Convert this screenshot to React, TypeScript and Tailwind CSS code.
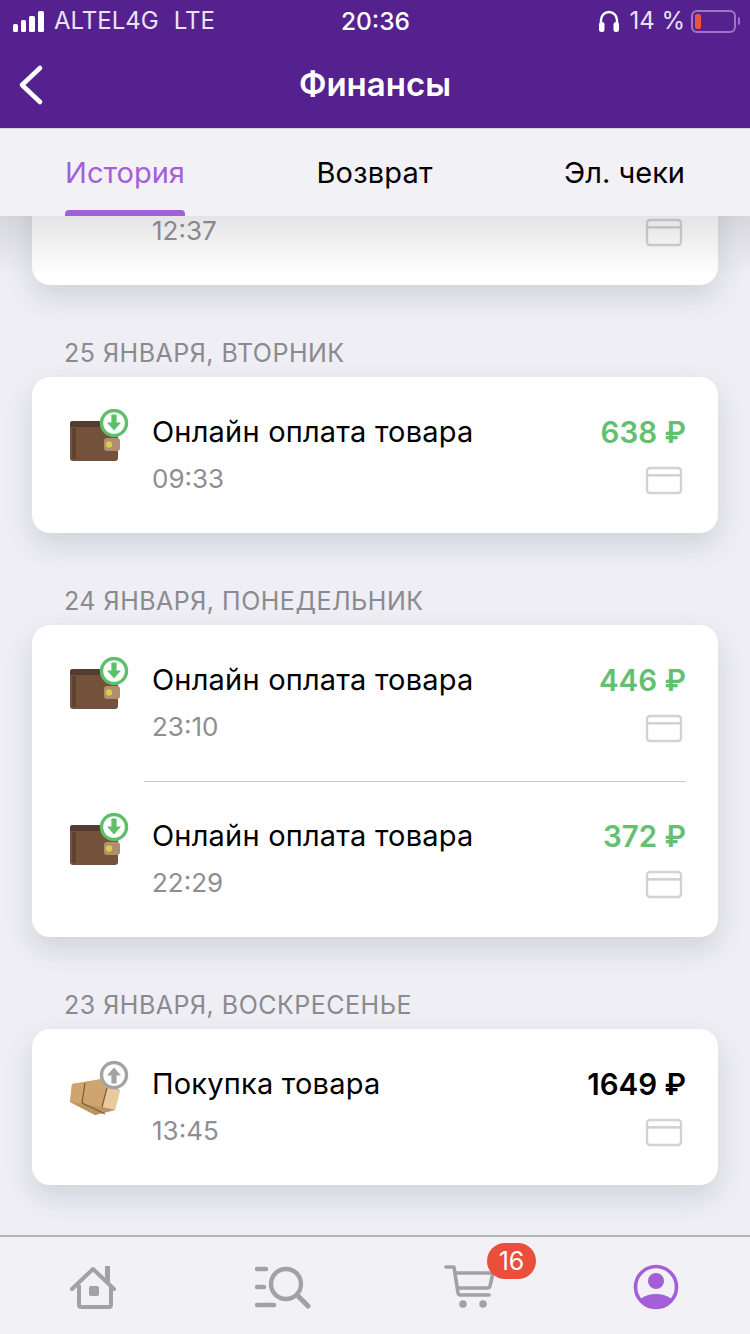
import React from "react";

const font = "font-['Inter','Noto_Sans',sans-serif]";

function WalletIcon() {
  return (
    <svg width="62" height="58" viewBox="0 0 62 58" className="shrink-0">
      <rect x="2" y="12" width="48" height="40" rx="3" fill="#74513a" />
      <path d="M2 15a3 3 0 0 1 3-3h42a3 3 0 0 1 3 3v3H2z" fill="#553c30" />
      <rect x="4" y="19" width="4" height="31" fill="#5f4331" />
      <rect x="36" y="29" width="16" height="13" rx="3" fill="#b08f6e" />
      <circle cx="41" cy="35.5" r="3.2" fill="#dccb4a" />
      <circle cx="46" cy="14" r="12.5" fill="#ffffff" stroke="#5dbf68" strokeWidth="3.4" />
      <path d="M43.4 5.500h5.200v8H53L46 21.500 39 13.500h4.400z" fill="#5dbf68" />
    </svg>
  );
}

function BoxIcon() {
  return (
    <svg width="62" height="58" viewBox="0 0 62 58" className="shrink-0">
      <path d="M4 23l30-5 18 11-5 20-20 5L2 41z" fill="#d2a972" />
      <path d="M4 23l30-5 5 9-5 19-32-5z" fill="#cfa56f" />
      <path d="M39 27l13 2-5 20-13-3z" fill="#e8ca9d" />
      <path d="M2 41l32 5 13 3-20 5z" fill="#bd9562" />
      <path d="M17 22l-3 20 23 11" fill="none" stroke="#7a5a38" strokeWidth="1.2" />
      <path d="M39 27l-5 19" stroke="#7a5a38" strokeWidth="1.2" />
      <circle cx="46" cy="14" r="12.5" fill="#ffffff" stroke="#a3a3a6" strokeWidth="3.4" />
      <path d="M43.400 22.500v-8H39l7-8 7 8h-4.400v8z" fill="#a3a3a6" />
    </svg>
  );
}

function CardIcon() {
  return (
    <svg width="38" height="29" viewBox="0 0 38 29" className="shrink-0">
      <rect x="2" y="2" width="34" height="25" rx="3" fill="none" stroke="#d2d2d3" strokeWidth="2.4" />
      <rect x="2" y="8" width="34" height="2.6" fill="#d2d2d3" />
    </svg>
  );
}

function Row({
  title,
  time,
  price,
  green = true,
  box = false,
}: {
  title: string;
  time: string;
  price: string;
  green?: boolean;
  box?: boolean;
}) {
  return (
    <div className="flex h-[156px] pl-[36px] pr-[32px]">
      <div className="w-[84px] pt-[32px]">{box ? <BoxIcon /> : <WalletIcon />}</div>
      <div className="flex-1">
        <div className="pt-[37px] text-[29px] leading-[36px] tracking-[0.2px] text-black">{title}</div>
        <div className="pt-[12px] text-[26px] leading-[34px] text-[#8e8e93]">{time}</div>
      </div>
      <div className="flex flex-col items-end">
        <div className={`pt-[37px] text-[29.5px] font-semibold leading-[36px] ${green ? "text-[#62c070]" : "text-black"}`}>
          {price}
        </div>
        <div className="pr-[3px] pt-[16px]">
          <CardIcon />
        </div>
      </div>
    </div>
  );
}

function Section({ label, children }: { label: string; children: React.ReactNode }) {
  return (
    <div>
      <div className="flex h-[92px] items-end pb-[8px] pl-[64px] text-[25px] leading-[32px] tracking-[0.5px] text-[#8a8a8f]">
        {label}
      </div>
      <div className="mx-[32px] rounded-[18px] bg-white shadow-[0_12px_28px_rgba(60,60,80,0.16)]">{children}</div>
    </div>
  );
}

export default function App() {
  return (
    <div className={`flex h-[1334px] w-[750px] flex-col overflow-hidden bg-[#eeeef4] ${font}`}>
      <div className="z-20 h-[128px] shrink-0 bg-[#55218f] text-white">
        <div className="flex h-[42px] items-center justify-between pl-[13px] pr-[10px] text-[24px] leading-none">
          <div className="flex w-[300px] items-center">
            <div className="flex h-[21px] items-end gap-[3px]">
              <div className="h-[8px] w-[5px] rounded-[1.5px] bg-white" />
              <div className="h-[12px] w-[5px] rounded-[1.5px] bg-white" />
              <div className="h-[16px] w-[6px] rounded-[1.5px] bg-white" />
              <div className="h-[21px] w-[6px] rounded-[1.5px] bg-white" />
            </div>
            <span className="ml-[10px] text-[#eae3f3]">ALTEL4G</span>
            <span className="ml-[15px] text-[#eae3f3]">LTE</span>
          </div>
          <div className="mr-[2px] text-[24.5px] font-medium">20:36</div>
          <div className="flex w-[300px] items-center justify-end">
            <svg width="22" height="24" viewBox="0 0 22 24">
              <path d="M3 14v-3a8 8 0 0 1 16 0v3" fill="none" stroke="#fff" strokeWidth="2.4" />
              <rect x="1" y="13" width="5.5" height="10" rx="2.5" fill="#fff" />
              <rect x="15.5" y="13" width="5.5" height="10" rx="2.5" fill="#fff" />
            </svg>
            <span className="ml-[9px] text-[24px] text-[#eae3f3]">14 %</span>
            <div className="ml-[6px] flex h-[23px] w-[45px] items-center rounded-[6px] border-2 border-[#9a78c4] px-[2px]">
              <div className="h-[15px] w-[6px] rounded-[2px] bg-[#e8553f]" />
            </div>
            <div className="ml-[2px] h-[8px] w-[2px] rounded-r-full bg-[#9a78c4]" />
          </div>
        </div>
        <div className="relative flex h-[86px] items-center justify-center text-[33px] font-semibold">
          <svg width="28" height="42" viewBox="0 0 28 42" className="absolute left-[17px] top-[22px]">
            <path d="M23 4L5 21l18 17" fill="none" stroke="#fff" strokeWidth="4.6" strokeLinecap="round" strokeLinejoin="round" />
          </svg>
          Финансы
        </div>
      </div>

      <div className="z-20 flex h-[88px] shrink-0 items-start justify-between border-t border-[#d8d7df] bg-[#f2f1f6] px-[65px] text-[29px] text-black">
        <div className="flex h-[87px] w-[120px] flex-col items-center justify-between">
          <div className="pt-[26px] leading-[36px] text-[#a55fd6]">История</div>
          <div className="h-[6px] w-[120px] rounded-t-[4px] bg-[#a55fd6]" />
        </div>
        <div className="pt-[26px] leading-[36px] tracking-[0.2px]">Возврат</div>
        <div className="pt-[26px] leading-[36px]">Эл. чеки</div>
      </div>

      <div className="relative h-[1019px] shrink-0 overflow-hidden">
        <div className="absolute inset-x-0 top-0 z-10 h-[60px] bg-gradient-to-b from-[rgba(90,90,100,0.16)] to-transparent" />
        <div className="mx-[32px] -mt-[87px] h-[156px] rounded-[18px] bg-white shadow-[0_12px_28px_rgba(60,60,80,0.16)]">
          <div className="flex h-full justify-between pl-[120px] pr-[35px]">
            <div className="pt-[85px] text-[26px] leading-[34px] text-[#8e8e93]">12:37</div>
            <div className="pt-[89px]">
              <CardIcon />
            </div>
          </div>
        </div>
        <Section label="25 ЯНВАРЯ, ВТОРНИК">
          <Row title="Онлайн оплата товара" time="09:33" price="638 ₽" />
        </Section>
        <Section label="24 ЯНВАРЯ, ПОНЕДЕЛЬНИК">
          <Row title="Онлайн оплата товара" time="23:10" price="446 ₽" />
          <div className="ml-[112px] mr-[32px] h-px bg-[#c9c9cc]" />
          <div className="-mt-px">
            <Row title="Онлайн оплата товара" time="22:29" price="372 ₽" />
          </div>
        </Section>
        <Section label="23 ЯНВАРЯ, ВОСКРЕСЕНЬЕ">
          <Row title="Покупка товара" time="13:45" price="1649 ₽" green={false} box />
        </Section>
      </div>

      <div className="z-20 grid h-[99px] shrink-0 grid-cols-4 border-t-2 border-[#b3b3b8] bg-[#f2f1f6]">
        <div className="flex items-start justify-center pt-[28px]">
          <svg width="50" height="44" viewBox="0 0 50 44">
            <path d="M3 24L24 4l21 20" fill="none" stroke="#a2a2a5" strokeWidth="4" strokeLinecap="round" strokeLinejoin="round" />
            <path d="M36 1h5v16h-5z" fill="#a2a2a5" />
            <path d="M10 20v20a2 2 0 0 0 2 2h28a2 2 0 0 0 2-2V20" fill="none" stroke="#a2a2a5" strokeWidth="4" />
            <rect x="20" y="21" width="10" height="10" rx="2" fill="#a2a2a5" />
          </svg>
        </div>
        <div className="flex items-start justify-center pl-[3px] pt-[28px]">
          <svg width="56" height="44" viewBox="0 0 56 44">
            <circle cx="31" cy="19" r="15" fill="none" stroke="#a2a2a5" strokeWidth="4.4" />
            <path d="M42 30l11 11" stroke="#a2a2a5" strokeWidth="5" strokeLinecap="round" />
            <path d="M2 4h9M2 22h7M2 40h17" stroke="#a2a2a5" strokeWidth="4.6" strokeLinecap="round" />
          </svg>
        </div>
        <div className="relative flex items-start justify-center pt-[28px]">
          <svg width="50" height="44" viewBox="0 0 50 44">
            <path d="M2 2h8l4 26a3 3 0 0 0 3 2h28" fill="none" stroke="#a2a2a5" strokeWidth="3.6" strokeLinecap="round" strokeLinejoin="round" />
            <path d="M11 8h38l-3 13a3 3 0 0 1-3 2H14" fill="none" stroke="#a2a2a5" strokeWidth="3.6" strokeLinejoin="round" />
            <circle cx="19" cy="39" r="3.8" fill="#a2a2a5" />
            <circle cx="39" cy="39" r="3.8" fill="#a2a2a5" />
          </svg>
          <div className="absolute left-[112px] top-[6px] flex h-[36px] w-[49px] items-center justify-center rounded-full bg-[#ea4f3c] text-[25px] leading-none text-white">
            16
          </div>
        </div>
        <div className="flex items-start justify-center pt-[27px]">
          <svg width="46" height="46" viewBox="0 0 46 46">
            <defs>
              <clipPath id="profile-clip">
                <circle cx="23" cy="23" r="20" />
              </clipPath>
            </defs>
            <circle cx="23" cy="23" r="20.5" fill="none" stroke="#a55fd6" strokeWidth="3.6" />
            <circle cx="23" cy="17" r="8" fill="#a55fd6" />
            <ellipse cx="23" cy="44" rx="20" ry="14" fill="#a55fd6" clipPath="url(#profile-clip)" />
          </svg>
        </div>
      </div>
    </div>
  );
}
